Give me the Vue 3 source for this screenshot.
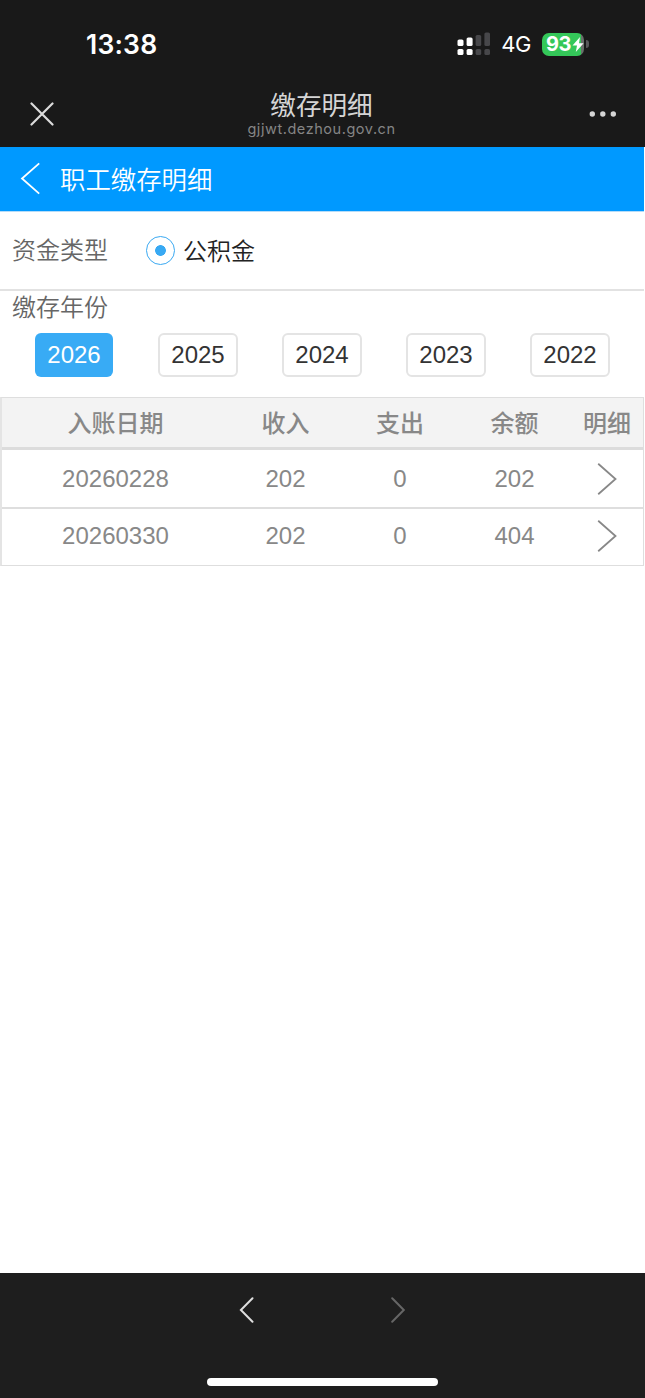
<template>
  <div class="screen">
    <header class="top">
      <div class="status-bar">
        <span class="time">13:38</span>
        <div class="status-right">
          <svg class="signal" width="34" height="24" viewBox="0 0 34 24">
            <g fill="#fff">
              <rect x="0.5" y="7.5" width="6" height="6.5" rx="1.6" />
              <rect x="9.6" y="5.5" width="6" height="8.5" rx="1.6" />
              <rect x="0.5" y="17" width="6" height="6" rx="1.6" />
              <rect x="9.6" y="17" width="6" height="6" rx="1.6" />
            </g>
            <g fill="#47474a">
              <rect x="18.6" y="3" width="5.6" height="11" rx="1.6" />
              <rect x="27.4" y="0.5" width="5.6" height="13.5" rx="1.6" />
              <rect x="18.6" y="17" width="5.6" height="6" rx="1.6" />
              <rect x="27.4" y="17" width="5.6" height="6" rx="1.6" />
            </g>
          </svg>
          <span class="network">4G</span>
          <div class="battery">
            <span class="battery-level">93</span>
            <svg class="bolt" width="12" height="15" viewBox="0 0 12 15">
              <path d="M8 0L0.5 8.5H5L3.8 15L11.6 6.2H7Z" fill="#fff" />
            </svg>
          </div>
          <span class="battery-cap"></span>
        </div>
      </div>

      <div class="nav-bar">
        <svg class="close" width="24" height="24" viewBox="0 0 24 24">
          <path d="M1.5 1.5L22.5 22.5M22.5 1.5L1.5 22.5" />
        </svg>
        <div class="nav-title">
          <div class="nav-name">缴存明细</div>
          <div class="nav-url">gjjwt.dezhou.gov.cn</div>
        </div>
        <svg class="more" width="28" height="6" viewBox="0 0 28 6">
          <circle cx="3.3" cy="3" r="2.7" />
          <circle cx="13.8" cy="3" r="2.7" />
          <circle cx="24.3" cy="3" r="2.7" />
        </svg>
      </div>
    </header>

    <main class="page">
      <div class="page-header">
        <svg width="20" height="34" viewBox="0 0 20 34">
          <path d="M19.2 1.3L2 16.5L19.2 31.7" />
        </svg>
        <h1>职工缴存明细</h1>
      </div>

      <div class="fund-row">
        <span class="label">资金类型</span>
        <label class="radio">
          <span class="radio-icon"></span>
          <span class="radio-text">公积金</span>
        </label>
      </div>

      <div class="year-block">
        <div class="label">缴存年份</div>
        <div class="years">
          <div v-for="year in years" :key="year" class="year-cell">
            <button :class="['year', { active: year === currentYear }]" @click="currentYear = year">
              {{ year }}
            </button>
          </div>
        </div>
      </div>

      <div class="table">
        <div class="row head">
          <span v-for="name in columns" :key="name">{{ name }}</span>
        </div>
        <div v-for="item in records" :key="item.date" class="row">
          <span>{{ item.date }}</span>
          <span>{{ item.income }}</span>
          <span>{{ item.expense }}</span>
          <span>{{ item.balance }}</span>
          <span>
            <svg width="20" height="32" viewBox="0 0 20 32">
              <path d="M1.2 0.8L18.5 16L1.2 31.2" />
            </svg>
          </span>
        </div>
      </div>
    </main>

    <footer class="bottom">
      <div class="bottom-nav">
        <svg width="16" height="26" viewBox="0 0 16 26">
          <path d="M13.5 1.3L1.9 13L13.5 24.7" />
        </svg>
        <svg class="disabled" width="16" height="26" viewBox="0 0 16 26">
          <path d="M2.2 1.3L13.8 13L2.2 24.7" />
        </svg>
      </div>
      <div class="home-indicator"></div>
    </footer>
  </div>
</template>

<script setup>
import { ref } from 'vue'

const years = [2026, 2025, 2024, 2023, 2022]
const currentYear = ref(2026)

const columns = ['入账日期', '收入', '支出', '余额', '明细']

const records = [
  { date: '20260228', income: 202, expense: 0, balance: 202 },
  { date: '20260330', income: 202, expense: 0, balance: 404 },
]
</script>

<style>
body {
  background: #fff;
}
</style>

<style scoped>
.screen {
  display: flex;
  flex-direction: column;
  height: 1398px;
  overflow: hidden;
  background: #fff;
  font-family: "Liberation Sans", "Noto Sans CJK SC", sans-serif;
}

svg {
  display: block;
  flex: none;
}

/* Status bar and browser title */
.top {
  height: 147px;
  background: #191919;
  color: #fff;
}

.status-bar {
  display: flex;
  justify-content: space-between;
  align-items: center;
  height: 80px;
  padding: 8px 56px 0 86px;
  box-sizing: border-box;
  font-family: Inter, sans-serif;
}

.time {
  font-size: 26.5px;
  font-weight: 600;
  letter-spacing: 0.2px;
}

.status-right {
  display: flex;
  align-items: center;
}

.network {
  margin-left: 10px;
  font-size: 22px;
  letter-spacing: -0.4px;
}

.battery {
  display: flex;
  align-items: center;
  width: 42px;
  height: 23px;
  margin-left: 11px;
  padding-left: 4px;
  box-sizing: border-box;
  border-radius: 7px;
  background: linear-gradient(to right, #34c759 39px, #69706b 39px);
}

.battery-level {
  font-size: 20px;
  font-weight: 700;
  letter-spacing: -0.5px;
}

.bolt {
  margin-left: 1px;
}

.battery-cap {
  width: 3px;
  height: 8px;
  margin-left: 2px;
  border-radius: 0 3px 3px 0;
  background: #58585a;
}

.nav-bar {
  display: flex;
  justify-content: space-between;
  align-items: center;
  height: 67px;
  padding: 0 28px 0 30px;
}

.close {
  stroke: #dcdcdc;
  stroke-width: 2.2;
  stroke-linecap: round;
}

.nav-title {
  padding-top: 2px;
  text-align: center;
  color: #d5d5d5;
}

.nav-name {
  height: 28px;
  font-size: 25.6px;
  font-weight: 400;
  line-height: 29px;
}

.nav-url {
  height: 18px;
  font-family: Inter, sans-serif;
  font-size: 14.5px;
  line-height: 18px;
  letter-spacing: 0.55px;
  color: #858585;
}

.more {
  fill: #d5d5d5;
}

/* Page content */
.page {
  flex: 1;
  width: 644px;
}

.page-header {
  display: flex;
  align-items: center;
  height: 65px;
  padding-left: 20px;
  box-sizing: border-box;
  border-bottom: 1px solid #b5dcf8;
  background: #0099ff;
}

.page-header path {
  fill: none;
  stroke: #fff;
  stroke-width: 1.8;
}

.page-header h1 {
  margin: 0 0 2px 20px;
  font-size: 25.4px;
  font-weight: 350;
  color: #fff;
}

.fund-row {
  display: flex;
  align-items: center;
  height: 79px;
  padding-left: 12px;
  box-sizing: border-box;
  border-bottom: 2px solid #e2e2e2;
}

.label {
  font-size: 24px;
  font-weight: 350;
  line-height: 34px;
  color: #666;
}

.radio {
  display: flex;
  align-items: center;
  margin-left: 38px;
  font-size: 24px;
  font-weight: 350;
  color: #222;
}

.radio-icon {
  width: 29px;
  height: 29px;
  margin-right: 8px;
  box-sizing: border-box;
  border: 1.5px solid #3aa9f2;
  border-radius: 50%;
  background: radial-gradient(circle, #38a9f3 5px, transparent 5.7px);
}

.radio-text {
  padding-bottom: 2px;
}

.year-block {
  height: 106px;
}

.year-block .label {
  padding-left: 12px;
}

.years {
  display: flex;
  padding: 8px 12px 0;
}

.year-cell {
  display: flex;
  flex: 1;
  justify-content: center;
}

.year {
  height: 44px;
  padding: 0 11.5px 1px;
  border: 2px solid #e4e4e4;
  border-radius: 6px;
  background: #fff;
  font-family: inherit;
  font-size: 24px;
  color: #333;
}

.year.active {
  padding: 0 12px 1px;
  border-width: 0;
  background: #38abf5;
  color: #fff;
}

/* Deposit records */
.table {
  box-sizing: border-box;
  border: 1px solid #dedede;
  border-left: 2px solid #e4e4e4;
  font-size: 24px;
  color: #888;
}

.row {
  display: grid;
  grid-template-columns: 227px 113px 116px 113px 1fr;
  align-items: center;
  height: 59px;
  box-sizing: border-box;
  border-bottom: 2px solid #dedede;
}

.row:last-child {
  height: 56px;
  padding-bottom: 2px;
  border-bottom: 0;
}

.row span {
  display: flex;
  justify-content: center;
}

.row path {
  fill: none;
  stroke: #888;
  stroke-width: 1.8;
}

.row.head {
  height: 52px;
  padding-bottom: 2px;
  border-bottom: 3px solid #dcdcdc;
  background: #f3f3f3;
  font-weight: 500;
}

/* Browser toolbar */
.bottom {
  display: flex;
  flex-direction: column;
  align-items: center;
  justify-content: space-between;
  height: 125px;
  padding: 24px 0 12px;
  box-sizing: border-box;
  background: #1e1e1e;
}

.bottom-nav {
  display: flex;
  gap: 135px;
}

.bottom-nav path {
  fill: none;
  stroke: #dedede;
  stroke-width: 2;
  stroke-linecap: round;
}

.bottom-nav .disabled path {
  stroke: #666;
}

.home-indicator {
  width: 231px;
  height: 8px;
  border-radius: 4px;
  background: #fff;
}
</style>
